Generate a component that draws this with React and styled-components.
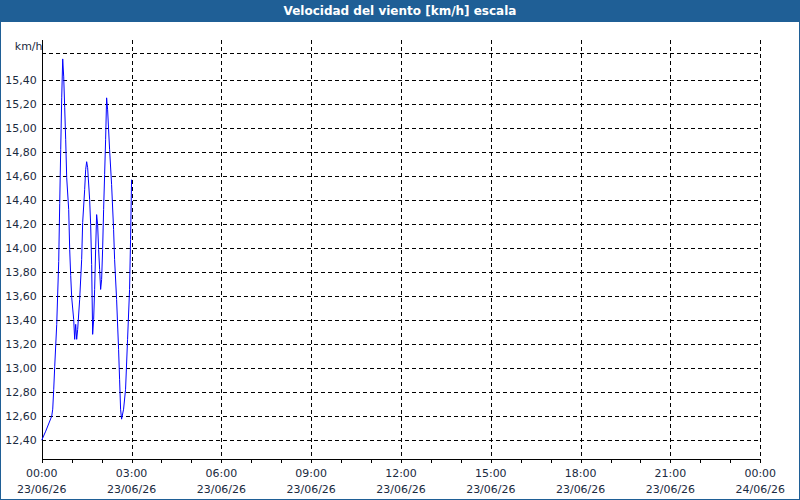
import React from "react";
import styled, { createGlobalStyle } from "styled-components";

const Global = createGlobalStyle`
  body { margin: 0; background: #fff; font-family: "DejaVu Sans", Verdana, sans-serif; }
`;

const Frame = styled.div`
  width: 800px;
  height: 500px;
  box-sizing: border-box;
  border: 1px solid #1f5f96;
  border-top: none;
  display: flex;
  flex-direction: column;
  background: #fff;
`;

const Title = styled.div`
  height: 22px;
  background: #1f5f96;
  color: #fff;
  font-size: 12px;
  font-weight: bold;
  display: flex;
  align-items: center;
  justify-content: center;
`;

const Plot = styled.svg`
  display: block;
  flex: 1;
`;

const pts = [[40,441],[44,432],[50,417],[51,410],[52,390],[53,367],[55,325],[57,262],[58,204],[59,150],[60,98],[61,59],[62,77],[63,108],[64,140],[65,178],[67,210],[68,250],[69,276],[70,298],[72,320],[73,340],[74,325],[75,340],[76,330],[78,300],[80,260],[81,223],[83,190],[84,170],[85,162],[86,168],[88,200],[89,225],[90,265],[91,335],[92,320],[93,290],[94,250],[95,215],[96,225],[97,250],[98,270],[99,290],[100,280],[101,250],[102,210],[103,175],[104,140],[105,98],[106,110],[108,150],[110,185],[112,230],[113,260],[115,300],[117,350],[118,380],[119,410],[120,420],[122,410],[124,390],[126,340],[128,290],[129,240],[130,180]];

const yLabels = ["15,40","15,20","15,00","14,80","14,60","14,40","14,20","14,00","13,80","13,60","13,40","13,20","13,00","12,80","12,60","12,40"];
const xTimes = ["00:00","03:00","06:00","09:00","12:00","15:00","18:00","21:00","00:00"];

export default function App() {
  const off = 22;
  const yOf = (i) => 80 + i * 24.07 - off;
  return (
    <>
      <Global />
      <Frame>
        <Title>Velocidad del viento [km/h] escala</Title>
        <Plot width="798" height="478" viewBox="0 22 798 478">
          <g fontFamily="DejaVu Sans, sans-serif" fontSize="11" fill="#1a2a40">
            <text x="13" y="50">km/h</text>
            {yLabels.map((l, i) => (
              <text key={l} x="35" y={80 + i * 24.07 + 4} textAnchor="end">{l}</text>
            ))}
            {xTimes.map((t, i) => (
              <g key={i}>
                <text x={40 + i * 90} y="478" textAnchor="middle">{t}</text>
                <text x={40 + i * 90} y="494" textAnchor="middle">{i === 8 ? "24/06/26" : "23/06/26"}</text>
              </g>
            ))}
          </g>
          <g stroke="#000" strokeDasharray="4 3" strokeWidth="1" shapeRendering="crispEdges">
            <line x1="40" x2="760" y1="53.5" y2="53.5" />
            {yLabels.map((l, i) => (
              <line key={l} x1="40" x2="760" y1={Math.round(80 + i * 24.07) + 0.5} y2={Math.round(80 + i * 24.07) + 0.5} />
            ))}
            {xTimes.slice(1).map((t, i) => (
              <line key={i} x1={130 + i * 90 + 0.5} x2={130 + i * 90 + 0.5} y1="40" y2="460" />
            ))}
          </g>
          <g stroke="#000" strokeWidth="1" shapeRendering="crispEdges">
            <line x1="40.5" x2="40.5" y1="40" y2="461" />
            <line x1="40" x2="760" y1="460.5" y2="460.5" />
            {Array.from({ length: 25 }, (_, i) => (
              <line key={i} x1={40 + i * 30 + 0.5} x2={40 + i * 30 + 0.5} y1="460" y2="464" />
            ))}
          </g>
          <polyline points={pts.map((p) => p.join(",")).join(" ")} fill="none" stroke="#0000ff" strokeWidth="1" />
        </Plot>
      </Frame>
    </>
  );
}
